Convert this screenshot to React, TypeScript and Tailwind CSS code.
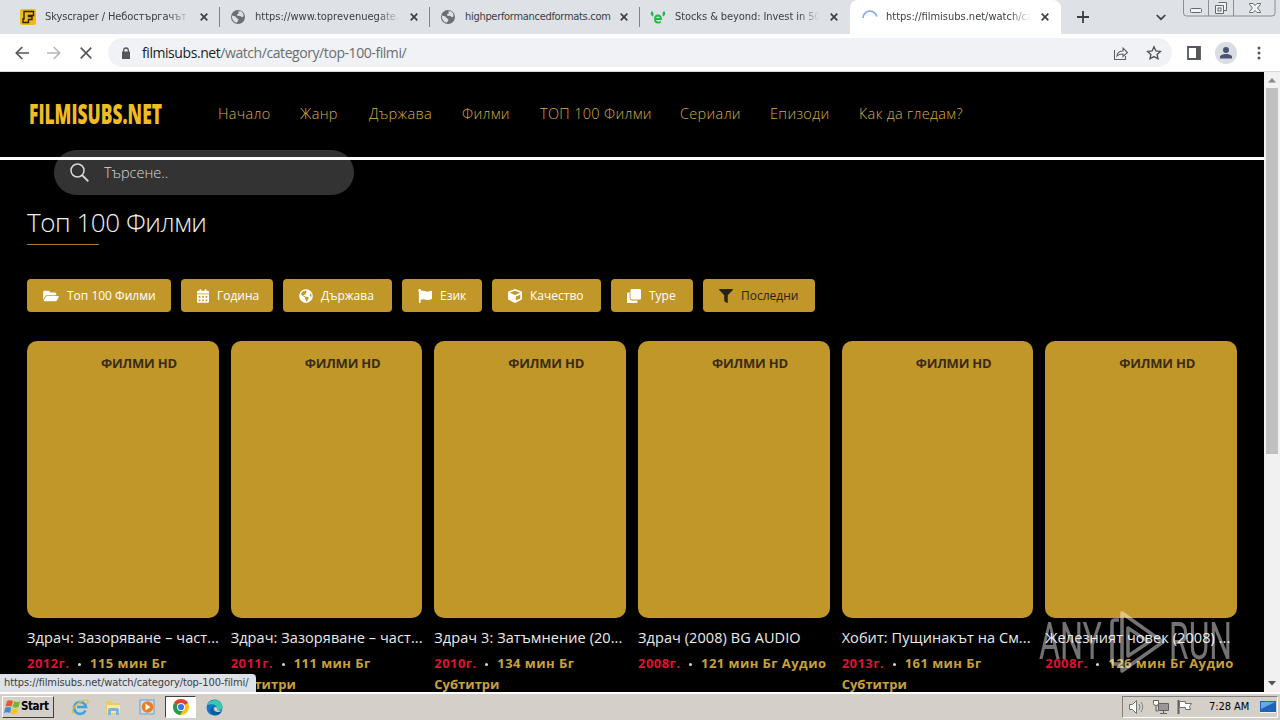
import { ReactNode } from "react";
import {
  FaCalendarAlt,
  FaClone,
  FaCube,
  FaFilter,
  FaFlag,
  FaFolderOpen,
  FaGlobeAmericas,
} from "react-icons/fa";

interface TabType {
  title: string;
  icon: ReactNode;
  spacing: string;
}

interface MovieType {
  title: string;
  year: string;
  info: string;
  subs?: boolean;
}

const GlobeIcon = () => (
  <svg className="w-4 h-4 shrink-0" viewBox="0 0 16 16">
    <circle cx="8" cy="8" r="7" fill="#6b6f74" />
    <path
      d="M2 6.500l3.500 1 1.500 2 1.500.5-.5 2-1.500 1.800C4 13 2.300 11 2 8.500zM8 2.500l3-.3 2 2 .7 3-1.700 1-2-1.500-2.500.3-.5-1.700 2-1z"
      fill="#dee1e6"
    />
  </svg>
);

const tabs: TabType[] = [
  {
    title: "Skyscraper / Небостъргачът (",
    spacing: "tracking-[-0.1px]",
    icon: (
      <svg className="w-4 h-4 shrink-0" viewBox="0 0 16 16">
        <rect width="16" height="16" rx="2" fill="#f2b90f" />
        <path
          d="M4 2.500h9.500v4h-5v1H12v3H8.500v3H3V10h1z"
          fill="#f2b90f"
          stroke="#2b2108"
          strokeWidth="1.400"
        />
      </svg>
    ),
  },
  { title: "https://www.toprevenuegate.", spacing: "tracking-[0px]", icon: <GlobeIcon /> },
  { title: "highperformancedformats.com", spacing: "tracking-[-0.3px]", icon: <GlobeIcon /> },
  {
    title: "Stocks & beyond: Invest in 50",
    spacing: "tracking-[-0.08px]",
    icon: (
      <svg className="w-4 h-4 shrink-0" viewBox="0 0 16 16">
        <path
          d="M2 2C0 4 .5 6.500 3 7.500 4 5.500 3.500 3 2 2zM14 2c2 2 1.500 4.500-1 5.500C12 5.500 12.500 3 14 2z"
          fill="#23b84b"
        />
        <path
          d="M5 10h6c0-2.300-1.200-3.500-3-3.500S5 8 5 10.200 6.300 13.600 8.300 13.600c1 0 1.800-.3 2.500-.9"
          fill="none"
          stroke="#23b84b"
          strokeWidth="1.900"
        />
      </svg>
    ),
  },
];

const menu = [
  { label: "Начало", width: "w-[82px]" },
  { label: "Жанр", width: "w-[69px]" },
  { label: "Държава", width: "w-[93px]" },
  { label: "Филми", width: "w-[78px]" },
  { label: "ТОП 100 Филми", width: "w-[140px]" },
  { label: "Сериали", width: "w-[90px]" },
  { label: "Епизоди", width: "w-[89px]" },
  { label: "Как да гледам?", width: "w-[120px]" },
];

const filters = [
  { label: "Топ 100 Филми", width: "w-[144px]", color: "text-white", icon: <FaFolderOpen className="w-4 h-3.5" /> },
  { label: "Година", width: "w-[92px]", color: "text-white", icon: <FaCalendarAlt className="w-3 h-3.5" /> },
  { label: "Държава", width: "w-[109px]", color: "text-white", icon: <FaGlobeAmericas className="w-3.5 h-3.5" /> },
  { label: "Език", width: "w-[80px]", color: "text-white", icon: <FaFlag className="w-3.5 h-3.5" /> },
  { label: "Качество", width: "w-[109px]", color: "text-white", icon: <FaCube className="w-3.5 h-3.5" /> },
  { label: "Type", width: "w-[82px]", color: "text-white", icon: <FaClone className="w-3.5 h-3.5" /> },
  { label: "Последни", width: "w-[112px]", color: "text-[#2a2118]", icon: <FaFilter className="w-3.5 h-3.5" /> },
];

const movies: MovieType[] = [
  { title: "Здрач: Зазоряване – част...", year: "2012г.", info: "115 мин Бг", subs: true },
  { title: "Здрач: Зазоряване – част...", year: "2011г.", info: "111 мин Бг", subs: true },
  { title: "Здрач 3: Затъмнение (20...", year: "2010г.", info: "134 мин Бг", subs: true },
  { title: "Здрач (2008) BG AUDIO", year: "2008г.", info: "121 мин Бг Аудио" },
  { title: "Хобит: Пущинакът на См...", year: "2013г.", info: "161 мин Бг", subs: true },
  { title: "Железният човек (2008) ...", year: "2008г.", info: "126 мин Бг Аудио" },
];

const CloseIcon = () => (
  <svg className="w-2 h-2 shrink-0" viewBox="0 0 8 8">
    <path d="M.7.7l6.600 6.600M7.300.7L.7 7.300" stroke="#3c4043" strokeWidth="1.700" />
  </svg>
);

const TabStrip = () => (
  <div className="flex h-[34px] bg-[#dee1e6]">
    <div className="flex w-[850px] pl-[10px]">
      {tabs.map((tab, i) => (
        <div key={i} className="flex items-center w-[210px] h-[34px] pl-[10px]">
          {tab.icon}
          <div
            className={`ml-[9px] w-[145px] whitespace-nowrap text-[11px] text-[#3c4043] ${
              i === 2 ? "" : "[mask-image:linear-gradient(to_right,black_85%,transparent)]"
            } ${tab.spacing}`}
          >
            {tab.title}
          </div>
          <div className="ml-[10px]">
            <CloseIcon />
          </div>
          {i < 3 && <div className="ml-[11px] w-px h-5 bg-[#808387]" />}
        </div>
      ))}
    </div>
    <div className="flex items-center w-[211px] h-[34px] pl-3 bg-white rounded-t-lg">
      <svg className="w-4 h-4 shrink-0" viewBox="0 0 16 16">
        <path d="M1 9A7 7 0 0 1 14.800 7.500" fill="none" stroke="#8ab0ee" strokeWidth="1.800" />
      </svg>
      <div className="ml-[8px] w-[145px] whitespace-nowrap text-[11px] text-[#3c4043] [mask-image:linear-gradient(to_right,black_85%,transparent)]">
        https://filmisubs.net/watch/ca
      </div>
      <div className="ml-[10px]">
        <CloseIcon />
      </div>
    </div>
    <div className="flex flex-1 items-center">
      <svg className="ml-[16px] w-3 h-3" viewBox="0 0 12 12">
        <path d="M6 0v12M0 6h12" stroke="#3c4043" strokeWidth="1.800" />
      </svg>
      <svg className="ml-[67px] w-[10px] h-[10px]" viewBox="0 0 10 10">
        <path d="M.7 3l4.300 4.200L9.300 3" fill="none" stroke="#3c4043" strokeWidth="1.700" />
      </svg>
      <svg className="ml-[17px] self-start w-[93px] h-[17px]" viewBox="0 0 93 17">
        <path
          d="M.5 0v13q0 3 3 3h85.500q3 0 3-3V0M25.500 0v16M50.500 0v16"
          fill="none"
          stroke="#8b8e93"
        />
        <rect x="7.500" y="8.500" width="11" height="4" rx="1" fill="#f2f3f5" stroke="#63666b" />
        <path d="M35.500 2.500h8v8h-3M32.500 5.500h8v8h-8z" fill="#f2f3f5" stroke="#63666b" />
        <rect x="35" y="8" width="3" height="3" fill="none" stroke="#63666b" />
        <path
          d="M66.500 3.500h3.500l2 2 2-2h3.500v1L74.500 8l3 3.500v1H74l-2-2-2 2h-3.500v-1l3-3.500-3-3.500z"
          fill="#f2f3f5"
          stroke="#63666b"
        />
      </svg>
    </div>
  </div>
);

const Toolbar = () => (
  <div className="flex items-center h-[38px] bg-white border-b border-[#d5d7da]">
    <svg className="ml-[15px] w-[14px] h-[14px]" viewBox="0 0 14 14">
      <path d="M14 7H1.500M7.300 1L1.300 7l6 6" fill="none" stroke="#54575c" strokeWidth="1.700" />
    </svg>
    <svg className="ml-[18px] w-[14px] h-[14px]" viewBox="0 0 14 14">
      <path d="M0 7h12.500M6.700 1l6 6-6 6" fill="none" stroke="#b4b6b9" strokeWidth="1.600" />
    </svg>
    <svg className="ml-[19px] w-3 h-3" viewBox="0 0 12 12">
      <path d="M.7.7l10.600 10.600M11.300.7L.7 11.300" stroke="#54575c" strokeWidth="1.700" />
    </svg>
    <div className="flex items-center ml-4 w-[1064px] h-[29px] rounded-full bg-[#f0f2f5]">
      <svg className="ml-[13px] w-[10px] h-[12px]" viewBox="0 0 10 12">
        <path d="M1 4.500h8V12H1z" fill="#54575c" />
        <path d="M2.700 5V3.300a2.300 2.300 0 0 1 4.600 0V5" fill="none" stroke="#54575c" strokeWidth="1.300" />
      </svg>
      <div className="ml-[11px] flex-1 whitespace-nowrap font-['Open_Sans'] text-[14px] tracking-[-0.43px] text-[#6a6d71]">
        <span className="text-[#202124]">filmisubs.net</span>/watch/category/top-100-filmi/
      </div>
      <svg className="mr-px w-4 h-4" viewBox="0 0 16 16">
        <path
          d="M1.500 5v9.500h11V11M4 11c.3-3.500 2.500-5 6-5V3l4.500 4.500L10 11.500V9c-3 0-4.700.5-6 2z"
          fill="none"
          stroke="#5f6368"
          strokeWidth="1.100"
        />
      </svg>
      <svg className="ml-[16px] mr-[10px] w-4 h-4" viewBox="0 0 16 16">
        <path
          d="M8 1.800l1.900 4.100 4.500.5-3.300 3 .9 4.400L8 11.600l-4 2.200.9-4.400-3.300-3 4.500-.5z"
          fill="none"
          stroke="#4b4e52"
          strokeWidth="1.300"
        />
      </svg>
    </div>
    <svg className="ml-[15px] w-[14px] h-[14px]" viewBox="0 0 14 14">
      <path d="M1 1h12v12H1z" fill="none" stroke="#54575c" strokeWidth="1.800" />
      <path d="M9 1h4v12H9z" fill="#54575c" />
    </svg>
    <svg className="ml-[14px] w-[22px] h-[22px]" viewBox="0 0 22 22">
      <circle cx="11" cy="11" r="11" fill="#dadce3" />
      <circle cx="11" cy="8" r="3" fill="#4a5272" />
      <path d="M5 16.500v-1.500c0-2 3-3 6-3s6 1 6 3v1.500z" fill="#4a5272" />
    </svg>
    <svg className="ml-[20px] w-1 h-[14px]" viewBox="0 0 4 14">
      <circle cx="2" cy="2" r="1.500" fill="#54575c" />
      <circle cx="2" cy="7" r="1.500" fill="#54575c" />
      <circle cx="2" cy="12" r="1.500" fill="#54575c" />
    </svg>
  </div>
);

const MovieCard = ({ title, year, info, subs }: MovieType) => (
  <div className="min-w-0">
    <div className="h-[277px] rounded-[10px] bg-[#c1972a] pt-[13px] pl-[74px] text-[13px] leading-[18px] font-bold text-[#3a2b14] tracking-[-0.2px]">
      ФИЛМИ HD
    </div>
    <div className="mt-2 whitespace-nowrap text-[14.5px] leading-6 font-medium tracking-[0.08px] text-[#ececec]">
      {title}
    </div>
    <div className="flex items-center mt-[4px] h-5 whitespace-nowrap text-[13px] font-bold tracking-[0.45px] text-[#c9a13c]">
      <span className="w-[51px] text-[#dd1133]">{year}</span>
      <span className="w-[3px] h-[3px] rounded-full bg-[#d8d8d8] mr-[9px]" />
      <span>{info}</span>
    </div>
    {subs && <div className="h-5 text-[13px] leading-5 font-bold text-[#c9a13c]">Субтитри</div>}
  </div>
);

const Watermark = () => (
  <svg className="absolute left-[1038px] top-[536px] w-[194px] h-[68px] opacity-45" viewBox="0 0 194 68">
    <g fill="#ffffff" fontFamily="Roboto, sans-serif" fontSize="52" fontWeight="400">
      <text x="1" y="51" textLength="63" lengthAdjust="spacingAndGlyphs">
        ANY
      </text>
      <text x="131" y="51" textLength="63" lengthAdjust="spacingAndGlyphs">
        RUN
      </text>
    </g>
    <g fill="none" stroke="#ffffff" strokeWidth="3.500" strokeLinejoin="round">
      <path d="M81 12h-4q-3 0-3 3v38q0 3 3 3h5" />
      <path d="M84 5l41 29-41 29z" />
      <path d="M90 20v28l21-14z" />
    </g>
  </svg>
);

const Page = () => (
  <div className="relative w-[1264px] h-[620px] overflow-hidden bg-black font-['Open_Sans','Noto_Sans',sans-serif]">
    <header className="relative z-10 flex items-center h-[88px] pl-[29px] border-b-3 border-white">
      <svg className="w-[134px] h-[26px]" viewBox="0 0 134 26">
        <text
          x="0"
          y="21.500"
          textLength="133"
          lengthAdjust="spacingAndGlyphs"
          fill="#f0bd20"
          fontSize="28"
          fontWeight="800"
          fontFamily="Open Sans, sans-serif"
        >
          FILMISUBS.NET
        </text>
      </svg>
      <nav className="flex ml-[55px] -mt-[2px] text-[14.5px] font-light tracking-[0.33px] text-[#d6ac48]">
        {menu.map((m) => (
          <a key={m.label} className={`shrink-0 whitespace-nowrap ${m.width}`}>
            {m.label}
          </a>
        ))}
      </nav>
    </header>
    <div className="flex items-center -mt-[10px] ml-[54px] w-[300px] h-[45px] rounded-full bg-[#333333] pl-4">
      <svg className="w-[19px] h-[19px]" viewBox="0 0 19 19">
        <circle cx="7.500" cy="7.500" r="6.500" fill="none" stroke="#d8d8d8" strokeWidth="1.500" />
        <path d="M12 12l6.300 6.300" stroke="#d8d8d8" strokeWidth="1.800" />
      </svg>
      <span className="ml-[15px] text-[14.5px] font-light text-[#d8d8d8]">Търсене..</span>
    </div>
    <main className="px-[27px]">
      <h1 className="mt-[7px] h-[42px] text-[26px] leading-10 font-light tracking-[-0.45px] text-[#f0f0f0]">
        Топ 100 Филми
      </h1>
      <div className="w-[72px] h-px bg-[#9d7c27]" />
      <div className="flex gap-[10px] mt-[34px]">
        {filters.map((f) => (
          <button
            key={f.label}
            className={`flex items-center gap-2 h-[33px] pl-4 pt-px rounded-[4px] bg-[#c1972a] text-[12px] whitespace-nowrap ${f.width} ${f.color}`}
          >
            {f.icon}
            {f.label}
          </button>
        ))}
      </div>
      <div className="grid grid-cols-6 gap-3 mt-[29px]">
        {movies.map((m, i) => (
          <MovieCard key={i} {...m} />
        ))}
      </div>
    </main>
    <Watermark />
    <div className="absolute left-0 bottom-0 flex items-center w-[256px] h-[18px] pl-[4px] rounded-tr-[4px] bg-[#dee1e6] font-['DejaVu_Sans_Condensed','DejaVu_Sans'] text-[11px] tracking-[-0.1px] text-[#3c4043] whitespace-nowrap">
      https://filmisubs.net/watch/category/top-100-filmi/
    </div>
  </div>
);

const ScrollBar = () => (
  <div className="flex flex-col items-center w-4 h-[620px] bg-[#f1f1f1]">
    <svg className="w-4 h-4" viewBox="0 0 16 16">
      <path d="M8 6l4 4.500H4z" fill="#8a8a8a" />
    </svg>
    <div className="w-3 h-[366px] bg-[#c1c1c1]" />
    <svg className="mt-auto w-4 h-[18px]" viewBox="0 0 16 18">
      <path d="M4 7h8l-4 4.500z" fill="#505050" />
    </svg>
  </div>
);

const Taskbar = () => (
  <div className="flex items-center h-7 bg-[#d4d0c8] border-t-2 border-white">
    <div className="flex items-center ml-[2px] w-[52px] h-[22px] pl-px border border-t-white border-l-white border-r-[#404040] border-b-[#404040] text-[11.5px] font-bold text-black">
      <svg className="w-[17px] h-4 shrink-0" viewBox="0 0 17 16">
        <path d="M3 2q3-1.500 6 0L7.500 7.500q-3-1.200-6 0z" fill="#e8582a" />
        <path d="M10 2.300q3 1.500 6 0L14.500 8q-3 1.300-6 0z" fill="#76b82a" />
        <path d="M1.300 8.700q3-1.200 6 0L6 14q-3-1.300-6 0z" fill="#3a8ede" />
        <path d="M8.200 9.200q3 1.300 6 0l-1.400 5.300q-3 1.300-6 0z" fill="#f7c51e" />
      </svg>
      <span className="tracking-[-0.4px]">Start</span>
    </div>
    <svg className="ml-[17px] w-[18px] h-[18px]" viewBox="0 0 18 18">
      <path d="M14.500 12.500A6 6 0 1 1 15 9H6" fill="none" stroke="#39a4e0" strokeWidth="2.500" />
      <path d="M2 15.500C-1 12 8 1.500 16 2c2 .5 1 3 0 4" fill="none" stroke="#e6bd3c" strokeWidth="1.200" />
    </svg>
    <svg className="ml-[16px] w-[17px] h-[17px]" viewBox="0 0 17 17">
      <path d="M1 2h6l1 2h7v11H1z" fill="#e9cb68" />
      <path d="M2 6h13v8H2z" fill="#f8e8a4" />
      <path d="M3 16v-5q0-2 2-2h7q2 0 2 2v5h-3v-4H6v4z" fill="#78b6dc" />
    </svg>
    <svg className="ml-[17px] w-[17px] h-[17px]" viewBox="0 0 17 17">
      <rect x="1" y="1" width="14" height="14" fill="#c8def0" stroke="#6aa0d0" />
      <circle cx="8.500" cy="8" r="5.800" fill="#ee7e1a" />
      <path d="M6.500 4.500l5 3.500-5 3.500z" fill="#fff" />
    </svg>
    <div className="flex items-center justify-center ml-[9px] w-[31px] h-[22px] bg-white border border-t-[#404040] border-l-[#404040] border-r-white border-b-white">
      <svg className="w-4 h-4" viewBox="0 0 16 16">
        <circle cx="8" cy="8" r="8" fill="#fbc116" />
        <path d="M1.100 4A8 8 0 0 0 7 16l4-6.500-3-1.500z" fill="#269b4b" />
        <path d="M8 8L1.100 4A8 8 0 0 1 14.900 4z" fill="#df4132" />
        <circle cx="8" cy="8" r="4" fill="#fff" />
        <circle cx="8" cy="8" r="3.100" fill="#3b78e7" />
      </svg>
    </div>
    <svg className="ml-[10px] w-[17px] h-[17px]" viewBox="0 0 17 17">
      <circle cx="8.500" cy="8.500" r="8" fill="#1278c8" />
      <path d="M1 6C3 0 15-1 16.500 7c.5 3-2 5-5.500 4 1-4-3-7-10-5z" fill="#38c9a8" />
      <path d="M8 7c-3 3-1 7 6 6l1.500-.5C14 16 10 17 7 16 3 13 4 8 8 7z" fill="#0c59a4" />
      <path d="M9 8q3 0 2 3l4 1q-3 2-6 0-2-2 0-4z" fill="#d4d0c8" />
    </svg>
    <div className="flex items-center ml-auto mr-[2px] w-[156px] h-[22px] pl-[5px] border border-t-[#808080] border-l-[#808080] border-r-white border-b-white text-[11px] text-black">
      <svg className="w-[18px] h-4" viewBox="0 0 18 16">
        <path d="M1.500 5.500h3l4-4v13l-4-4h-3z" fill="#fff" stroke="#707070" />
        <path d="M11 5q2 3 0 6M13 3q3.500 5 0 10" fill="none" stroke="#808080" />
      </svg>
      <svg className="ml-[7px] w-4 h-4" viewBox="0 0 16 16">
        <path d="M5.500 4.500h10v7h-10z" fill="#989898" stroke="#606060" />
        <path d="M10.500 12v2.500M7 14.500h7M3 7v5h2" fill="none" stroke="#606060" />
        <path d="M.5 1.500h5v3q0 2-2.500 2T.5 4.500z" fill="#fff" stroke="#606060" />
      </svg>
      <svg className="ml-[8px] w-4 h-4" viewBox="0 0 16 16">
        <path d="M1.500 1v14" stroke="#606060" strokeWidth="2" />
        <path d="M2.500 2.500h6v2h6l-2 3 1 3h-5v-2h-6z" fill="#fff" stroke="#707070" />
      </svg>
      <span className="ml-[16px] w-[42px] whitespace-nowrap tracking-[-0.05px]">7:28 AM</span>
      <svg className="ml-[9px] w-4 h-[14px] shrink-0" viewBox="0 0 16 14">
        <path d="M0 1h16v11H0z" fill="#1f64b8" />
        <path d="M1 2h14L1 9z" fill="#65a9e8" />
        <path d="M0 12h16v1H0z" fill="#eef3f8" />
      </svg>
    </div>
  </div>
);

const App = () => {
  return (
    <div className="flex flex-col w-[1280px] h-[720px] overflow-hidden font-['DejaVu_Sans_Condensed','DejaVu_Sans',sans-serif]">
      <TabStrip />
      <Toolbar />
      <div className="flex">
        <Page />
        <ScrollBar />
      </div>
      <Taskbar />
    </div>
  );
};

export default App;
